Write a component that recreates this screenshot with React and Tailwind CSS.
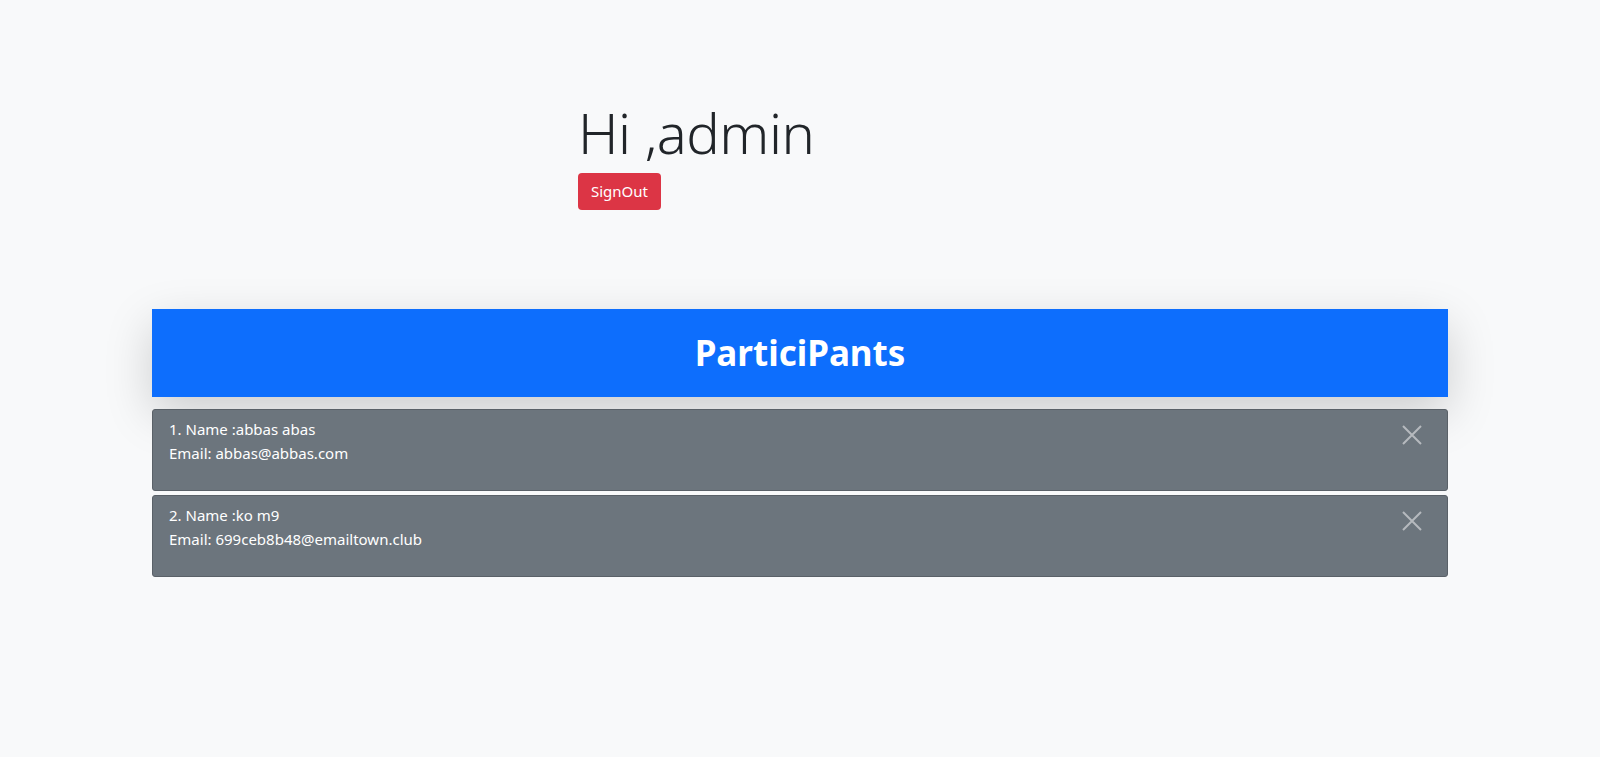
import React from "react";

const participants = [
  { name: "abbas abas", email: "abbas@abbas.com" },
  { name: "ko m9", email: "699ceb8b48@emailtown.club" },
];

function CloseIcon() {
  return (
    <svg width="20" height="20" viewBox="0 0 20 20" fill="none">
      <path d="M1 1L19 19M19 1L1 19" stroke="#b6babe" strokeWidth="2" />
    </svg>
  );
}

export default function App() {
  return (
    <div
      className="min-h-screen bg-[#f8f9fa] text-[#212529]"
      style={{ fontFamily: '"Noto Sans", "Open Sans", sans-serif' }}
    >
      <header className="pt-[98px] pl-[578px] h-[309px]">
        <h1 className="text-[56px] leading-[68px] font-light tracking-[-0.5px]">Hi ,admin</h1>
        <button className="mt-[7px] h-[37px] px-[13px] rounded-[4px] bg-[#dc3545] text-white text-[15px]">
          SignOut
        </button>
      </header>

      <main className="px-[152px]">
        <div className="h-[88px] bg-[#0d6efd] flex items-center justify-center shadow-[0_16px_48px_rgba(0,0,0,0.175)]">
          <h2 className="text-white text-[35px] font-bold">ParticiPants</h2>
        </div>

        <ul className="mt-[12px] flex flex-col gap-[4px]">
          {participants.map((p, i) => (
            <li
              key={p.email}
              className="h-[82px] bg-[#6c757d] border border-[#5a6168] rounded-[3px] pl-[16px] pr-[25px] pt-[7px] flex justify-between text-white text-[15px] leading-[24px]"
            >
              <div>
                <p>
                  {i + 1}. Name :{p.name}
                </p>
                <p>Email: {p.email}</p>
              </div>
              <button className="mt-[8px] h-[20px]">
                <CloseIcon />
              </button>
            </li>
          ))}
        </ul>
      </main>
    </div>
  );
}
